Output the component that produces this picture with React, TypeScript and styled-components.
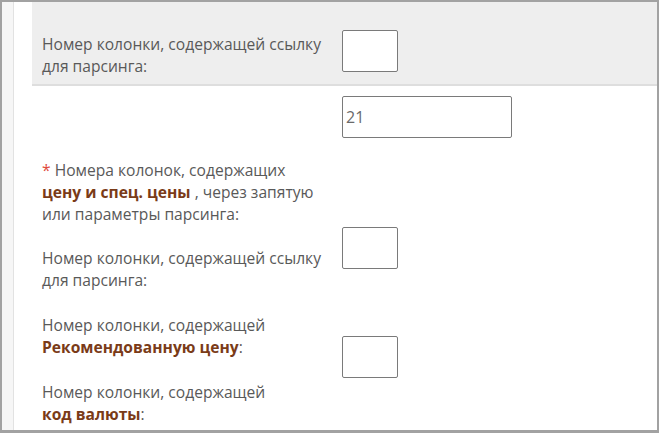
import React from "react";
import styled, { createGlobalStyle } from "styled-components";

const Global = createGlobalStyle`
  html, body { margin: 0; padding: 0; background: #fff; }
  body { font-family: "Open Sans", "Noto Sans", sans-serif; }
`;

const Frame = styled.div`
  width: 659px;
  height: 433px;
  box-sizing: border-box;
  border: 2px solid #a2a2a2;
  border-bottom-width: 3px;
  display: flex;
  overflow: hidden;
  background: #fff;
`;

const Gutter = styled.div`
  width: 11px;
  flex: none;
  background: #f6f6f6;
  border-right: 1px solid #e2e2e2;
`;

const Content = styled.div`
  flex: 1;
  padding-left: 18px;
  display: flex;
  flex-direction: column;
`;

const Row = styled.div<{ $shaded?: boolean; $h?: number }>`
  display: grid;
  grid-template-columns: 310px 1fr;
  align-items: start;
  background: ${(p) => (p.$shaded ? "#eeeeee" : "transparent")};
  border-bottom: ${(p) => (p.$shaded ? "2px solid #dedede" : "none")};
  height: ${(p) => (p.$h ? `${p.$h}px` : "auto")};
  flex: none;
`;

const Label = styled.div<{ $top: number }>`
  padding: ${(p) => p.$top}px 0 0 10px;
  font-size: 15.6px;
  line-height: 22px;
  color: #595959;
  white-space: nowrap;
`;

const Strong = styled.b`
  color: #7a3b18;
  font-weight: 700;
`;

const Req = styled.span`
  color: #e0493c;
`;

const Field = styled.input<{ $top: number; $w: number }>`
  display: block;
  margin-top: ${(p) => p.$top}px;
  width: ${(p) => p.$w}px;
  height: 42px;
  box-sizing: border-box;
  border: 1px solid #7a7a7a;
  border-radius: 2px;
  background: #fff;
  padding: 0 3px;
  font-family: "Open Sans", "Noto Sans", sans-serif;
  font-size: 16px;
  color: #6a6a6a;
  outline: none;
`;

export default function App() {
  return (
    <>
      <Global />
      <Frame>
        <Gutter />
        <Content>
          <Row $shaded $h={82}>
            <Label $top={31}>
              Номер колонки, содержащей ссылку
              <br />
              для парсинга:
            </Label>
            <div>
              <Field $top={28} $w={56} defaultValue="" />
            </div>
          </Row>
          <Row>
            <Label $top={73}>
              <Req>*</Req> Номера колонок, содержащих
              <br />
              <Strong>цену и спец. цены</Strong> , через запятую
              <br />
              или параметры парсинга:
            </Label>
            <div>
              <Field $top={10} $w={170} defaultValue="21" />
            </div>
          </Row>
          <Row>
            <Label $top={22}>
              Номер колонки, содержащей ссылку
              <br />
              для парсинга:
            </Label>
            <div>
              <Field $top={2} $w={56} defaultValue="" />
            </div>
          </Row>
          <Row $h={87}>
            <Label $top={23}>
              Номер колонки, содержащей
              <br />
              <Strong>Рекомендованную цену</Strong>:
            </Label>
            <div>
              <Field $top={45} $w={56} defaultValue="" />
            </div>
          </Row>
          <Row>
            <Label $top={3}>
              Номер колонки, содержащей
              <br />
              <Strong>код валюты</Strong>:
            </Label>
            <div />
          </Row>
        </Content>
      </Frame>
    </>
  );
}
